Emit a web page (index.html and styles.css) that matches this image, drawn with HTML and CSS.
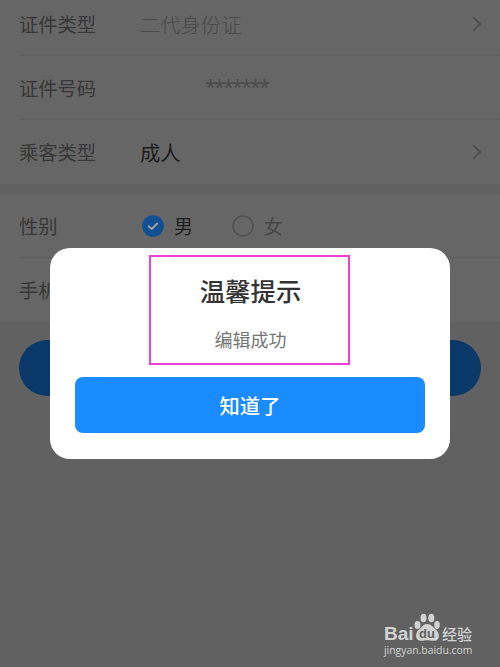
FILE: index.html
```html
<!DOCTYPE html>
<html lang="zh-CN">
<head>
<meta charset="utf-8">
<title>温馨提示</title>
<link rel="stylesheet" href="styles.css">
</head>
<body>
<main class="page">
  <section class="group group-id">
    <div class="row"><span class="label">证件类型</span><span class="value muted">二代身份证</span>
      <svg class="chevron" viewBox="0 0 10 16"><path d="M1.5 1.5 8 8 1.5 14.5"/></svg></div>
    <div class="row"><span class="label">证件号码</span><span class="masked">*******</span></div>
    <div class="row last"><span class="label">乘客类型</span><span class="value">成人</span>
      <svg class="chevron" viewBox="0 0 10 16"><path d="M1.5 1.5 8 8 1.5 14.5"/></svg></div>
  </section>
  <section class="group">
    <div class="row"><span class="label">性别</span>
      <span class="option checked"><svg class="radio" viewBox="0 0 22 22"><circle cx="11" cy="11" r="10.8"/><path d="M6.6 11.2 9.8 14 15.2 8.5"/></svg>男</span>
      <span class="option"><svg class="radio" viewBox="0 0 22 22"><circle cx="11" cy="11" r="10"/></svg>女</span>
    </div>
    <div class="row last"><span class="label">手机号码</span></div>
  </section>
  <div class="save"></div>
</main>
<div class="dialog">
  <div class="notice">
    <h1 class="title">温馨提示</h1>
    <p class="message">编辑成功</p>
  </div>
  <button class="confirm">知道了</button>
</div>
<div class="watermark">
  <div class="brand">
    <span class="bai">Bai</span>
    <span class="paw">
      <svg viewBox="0 0 26 29"><ellipse cx="3.5" cy="12" rx="3" ry="4"/><ellipse cx="9.5" cy="5" rx="3" ry="4.3"/><ellipse cx="17.3" cy="5" rx="3" ry="4.3"/><ellipse cx="23" cy="12" rx="2.8" ry="4"/><path d="M13 11C9 11 8 14.5 4.5 17C1 20 1 27.5 6.5 27.8C10 28 11 27.3 13.3 27.3C15.5 27.3 17 28 20.5 27.8C26 27.5 26 20.5 22.3 17C19 14.5 17.5 11 13 11Z"/></svg>
      <span class="du">du</span>
    </span>
    <span class="exp">经验</span>
  </div>
  <div class="site">jingyan.baidu.com</div>
</div>
</body>
</html>
```
FILE: styles.css
```css
* { box-sizing: border-box; }
body {
  margin: 0;
  height: 667px;
  position: relative;
  overflow: hidden;
  background: #616161;
  font-family: "Noto Sans CJK SC", sans-serif;
}
.page { display: flow-root; }
.group { background: #666; margin-bottom: 10px; padding-left: 19px; }
.group-id { margin-top: -8px; }
.row {
  height: 64px;
  display: flex;
  align-items: center;
  border-bottom: 1px solid #606060;
  padding-right: 18px;
}
.row.last { border-bottom-color: transparent; }
.label { width: 121px; font-size: 19.3px; color: #373737; white-space: nowrap; }
.value { font-size: 20.3px; color: #1c1c1c; }
.muted { font-weight: 300; color: #484848; }
.masked {
  margin-left: 65px;
  padding-bottom: 2px;
  font: 20px "Noto Sans", sans-serif;
  letter-spacing: -2px;
  color: #4b4b4b;
}
.chevron { width: 10px; height: 16px; margin-left: auto; fill: none; stroke: #484848; stroke-width: 1.6; }
.option {
  width: 90px;
  display: flex;
  align-items: center;
  gap: 10px;
  font-size: 19px;
  color: #464646;
}
.option.checked { color: #1c1c1c; }
.radio { width: 22px; height: 22px; margin-left: 2px; fill: none; stroke: #505050; stroke-width: 1.5; }
.checked .radio circle { fill: #0f4f92; stroke: none; }
.checked .radio path { stroke: #a0a0a0; stroke-width: 2; stroke-linecap: round; stroke-linejoin: round; }
.save { height: 56px; margin: 18px 19px 0; border-radius: 28px; background: #0a3868; }
.dialog {
  position: absolute;
  left: 50px;
  top: 248px;
  width: 400px;
  height: 211px;
  padding: 7px 25px 25px;
  border-radius: 20px;
  background: #fff;
}
.notice {
  width: 201px;
  height: 110px;
  margin: 0 0 0 73.5px;
  border: 2px solid #ee3fd6;
  text-align: center;
}
.title { margin: 14px 0 0 3px; font-size: 25.4px; line-height: 38px; font-weight: 500; color: #333; }
.message { margin: 16px 0 0 3px; font-size: 18px; line-height: 28px; color: #757575; }
.confirm {
  display: block;
  width: 350px;
  height: 56px;
  margin-top: 12px;
  padding: 0;
  border: 0;
  border-radius: 8px;
  background: #1a8cff;
  color: #fff;
  font: 500 20.3px "Noto Sans CJK SC", sans-serif;
}
.watermark { position: absolute; left: 384px; top: 613px; color: #d2d2d2; }
.brand { height: 30px; display: flex; align-items: flex-end; }
.bai { width: 30px; font: bold 19px/18px "Liberation Sans", sans-serif; }
.paw { position: relative; width: 26px; height: 29px; margin-bottom: 1px; }
.paw svg { display: block; width: 26px; height: 29px; fill: #d2d2d2; }
.du { position: absolute; left: 5px; top: 13px; color: #616161; font: bold 13px/15px "Liberation Sans", sans-serif; }
.exp { margin-left: 2px; font-size: 15px; line-height: 18px; font-weight: 500; white-space: nowrap; }
.site { font: 10.4px/14px "Open Sans", sans-serif; white-space: nowrap; }
```
